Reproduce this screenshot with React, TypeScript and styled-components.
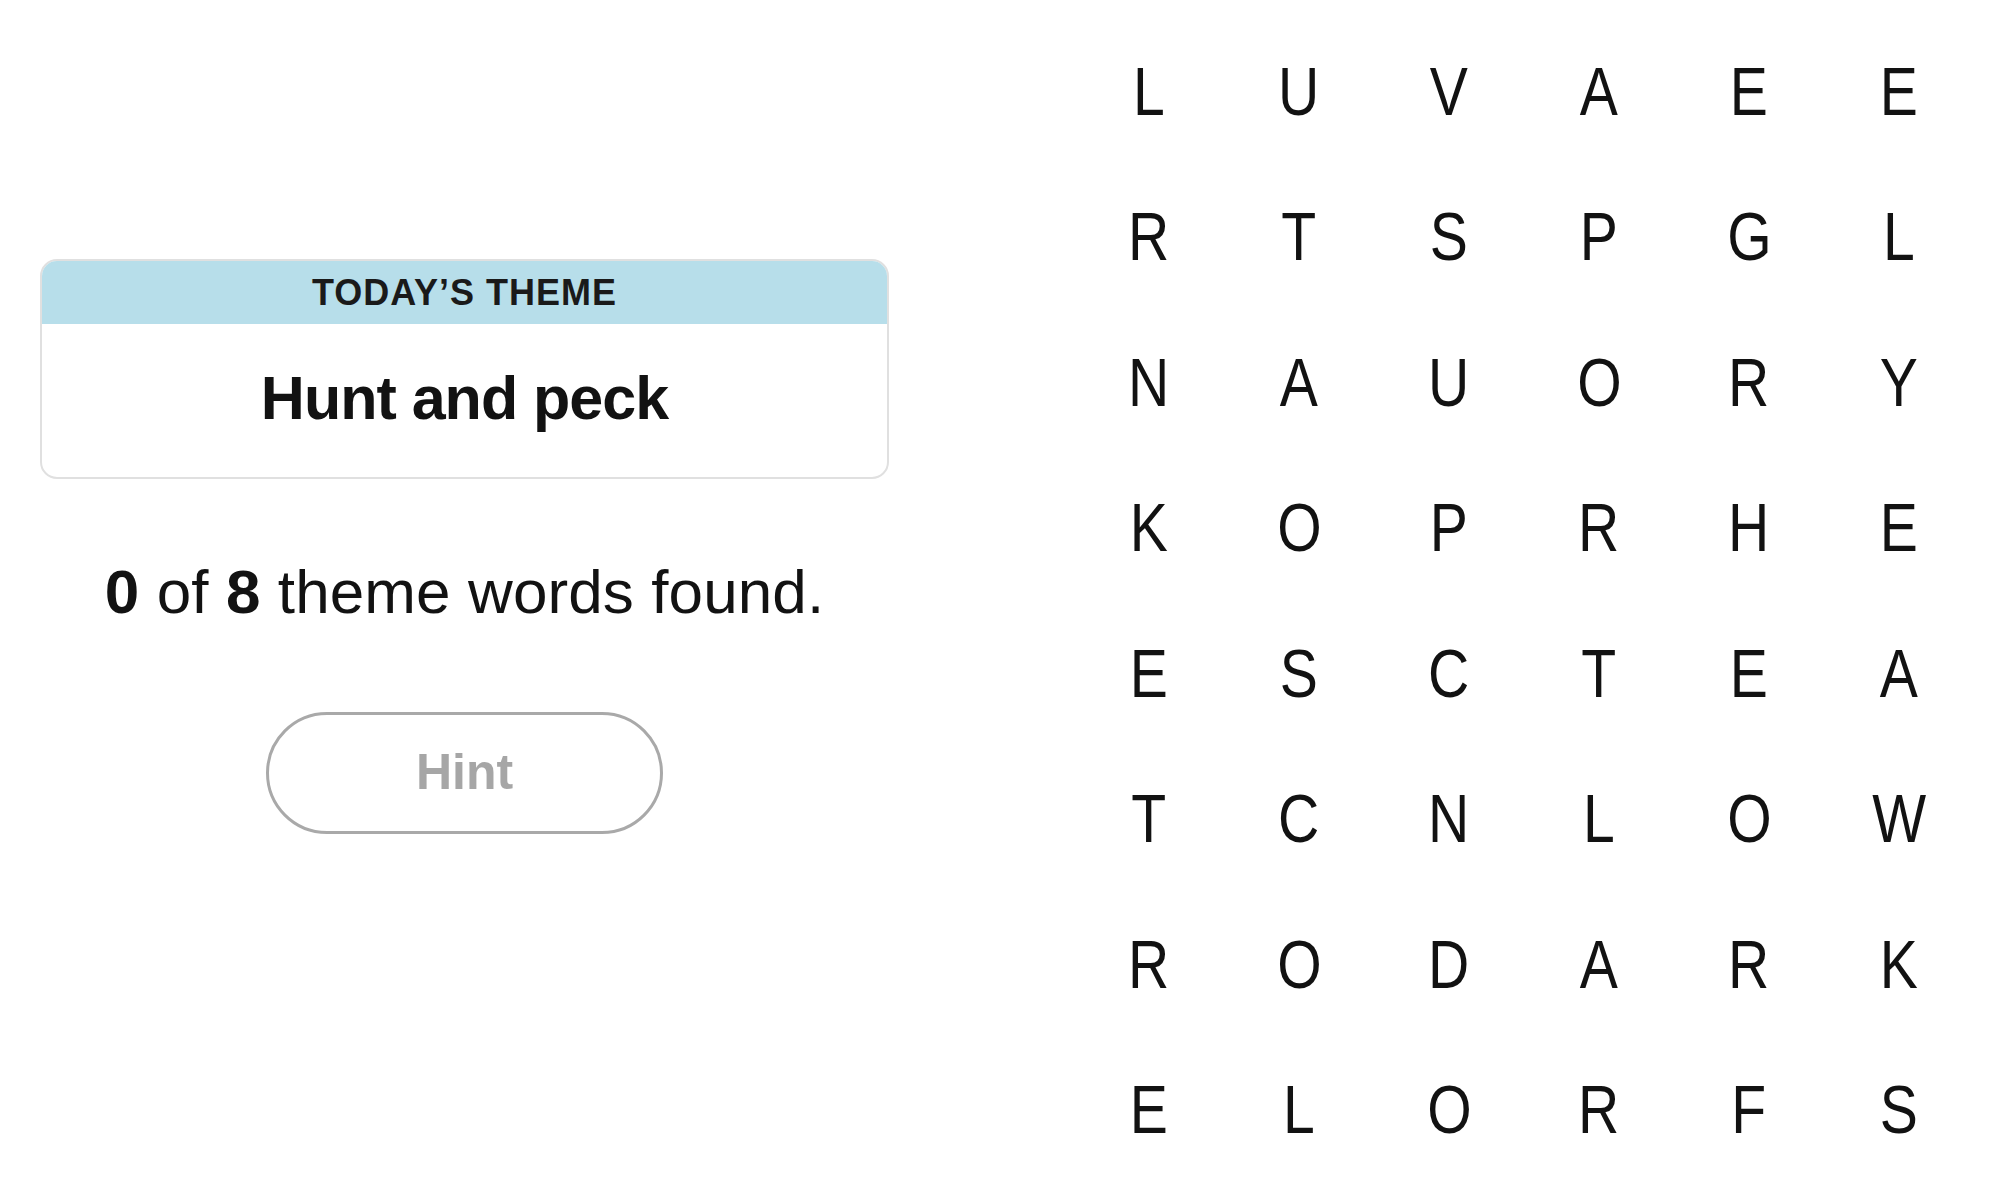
import styled, { createGlobalStyle } from "styled-components";

const GlobalStyle = createGlobalStyle`
  html, body {
    margin: 0;
    padding: 0;
    background: #ffffff;
  }
  body {
    font-family: "Liberation Sans", Arial, sans-serif;
    color: #121212;
  }
`;

const Page = styled.div`
  display: flex;
  align-items: flex-start;
  gap: 185px;
  padding: 0 26px 0 40px;
  height: 1189px;
  box-sizing: border-box;
`;

const Sidebar = styled.div`
  width: 849px;
  display: flex;
  flex-direction: column;
  align-items: center;
  padding-top: 259px;
`;

const ThemeCard = styled.div`
  width: 100%;
  height: 220px;
  box-sizing: border-box;
  border: 2px solid #e0e0e0;
  border-radius: 17px;
  overflow: hidden;
  display: flex;
  flex-direction: column;
`;

const ThemeHeader = styled.div`
  height: 65px;
  margin: -2px -2px 0;
  padding-top: 3px;
  box-sizing: border-box;
  background: #b7deea;
  display: flex;
  align-items: center;
  justify-content: center;
  font-size: 36px;
  font-weight: 700;
  letter-spacing: 1px;
  color: #1a1a1a;
`;

const ThemeBody = styled.div`
  flex: 1;
  display: flex;
  align-items: center;
  justify-content: center;
  padding-bottom: 6px;
  font-size: 61px;
  font-weight: 700;
  letter-spacing: -1px;
`;

const Status = styled.p`
  margin: 76px 0 0;
  font-size: 62px;
  line-height: 74px;
  letter-spacing: 0.1px;
  text-align: center;

  b {
    font-weight: 700;
  }
`;

const HintButton = styled.button`
  margin-top: 83px;
  width: 397px;
  height: 122px;
  padding: 0 0 3px;
  border: 3px solid #a9a9a9;
  border-radius: 61px;
  background: #ffffff;
  color: #a6a6a6;
  font-family: "Liberation Sans", Arial, sans-serif;
  font-size: 50px;
  font-weight: 700;
  cursor: default;
`;

const Board = styled.div`
  display: grid;
  grid-template-columns: repeat(6, 150px);
  grid-auto-rows: 145.5px;
  padding-top: 18px;
`;

const Cell = styled.div`
  display: flex;
  align-items: center;
  justify-content: center;
  font-size: 68px;
  color: #121212;
`;

const Letter = styled.span`
  display: inline-block;
  transform: scaleX(0.84);
`;

const rows = [
  "LUVAEE",
  "RTSPGL",
  "NAUORY",
  "KOPRHE",
  "ESCTEA",
  "TCNLOW",
  "RODARK",
  "ELORFS",
];

export default function App() {
  return (
    <>
      <GlobalStyle />
      <Page>
        <Sidebar>
          <ThemeCard>
            <ThemeHeader>TODAY’S THEME</ThemeHeader>
            <ThemeBody>Hunt and peck</ThemeBody>
          </ThemeCard>
          <Status>
            <b>0</b> of <b>8</b> theme words found.
          </Status>
          <HintButton>Hint</HintButton>
        </Sidebar>
        <Board>
          {rows.map((row, r) =>
            row.split("").map((ch, c) => (
              <Cell key={`${r}-${c}`}>
                <Letter>{ch}</Letter>
              </Cell>
            ))
          )}
        </Board>
      </Page>
    </>
  );
}
